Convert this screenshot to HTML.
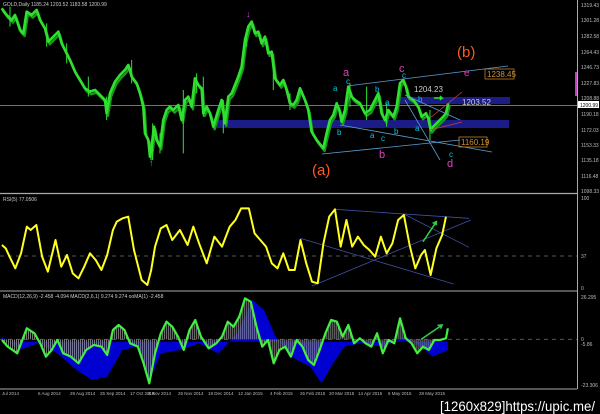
<!DOCTYPE html>
<html><head><meta charset="utf-8"><style>
html,body{margin:0;padding:0;background:#000;width:600px;height:414px;overflow:hidden}
svg{display:block}
text{font-family:"Liberation Sans",sans-serif}
</style></head><body>
<svg width="600" height="414" viewBox="0 0 600 414">
<defs>
<pattern id="hs" width="2" height="4" patternUnits="userSpaceOnUse" patternTransform="scale(2.61,3)"><rect width="1" height="4" fill="#8a8a8a"/></pattern>
</defs>
<rect width="600" height="414" fill="#000"/>
<rect x="217" y="120" width="292" height="8" fill="#1c1c88"/>
<rect x="397" y="97" width="113" height="7" fill="#1c1c88"/>
<line x1="0" y1="105.5" x2="577" y2="105.5" stroke="#9a9a9a" stroke-width="0.8"/>
<g transform="scale(0.3333)">
<polyline fill="none" stroke="#1a9a1a" stroke-width="7" stroke-linejoin="round" transform="translate(4,8)" points="5,25 20,45 35,60 45,45 60,90 70,100 80,35 95,45 110,30 120,60 135,85 145,125 160,110 175,95 185,130 195,150 210,180 225,215 240,240 255,265 270,275 285,270 300,285 315,300 320,340 330,280 345,245 360,225 375,210 385,195 395,230 410,250 420,280 430,320 435,400 445,420 450,470 455,440 462,380 470,420 480,440 490,360 500,330 510,320 520,330 535,315 545,360 555,300 565,290 575,320 585,235 595,255 605,265 610,340 620,320 630,340 640,380 655,330 665,300 675,370 685,290 695,280 705,255 715,230 725,200 735,120 745,80 755,65 765,100 775,95 785,130 795,110 805,160 815,155 825,235 840,255 850,240 860,270 870,310 880,315 890,300 900,265 915,300 925,330 935,395 950,420 970,445 980,400 990,360 1000,345 1010,310 1018,330 1025,365 1035,330 1045,260 1055,290 1065,300 1080,310 1095,340 1110,330 1125,300 1135,280 1145,340 1155,360 1165,330 1180,350 1190,320 1200,250 1210,240 1218,260 1225,290 1240,300 1255,320 1265,350 1278,340 1285,355 1292,390 1300,380 1310,370 1320,360 1330,350 1338,340 1345,310"/>
<polyline fill="none" stroke="#30e030" stroke-width="8" stroke-linejoin="round" points="5,25 20,45 35,60 45,45 60,90 70,100 80,35 95,45 110,30 120,60 135,85 145,125 160,110 175,95 185,130 195,150 210,180 225,215 240,240 255,265 270,275 285,270 300,285 315,300 320,340 330,280 345,245 360,225 375,210 385,195 395,230 410,250 420,280 430,320 435,400 445,420 450,470 455,440 462,380 470,420 480,440 490,360 500,330 510,320 520,330 535,315 545,360 555,300 565,290 575,320 585,235 595,255 605,265 610,340 620,320 630,340 640,380 655,330 665,300 675,370 685,290 695,280 705,255 715,230 725,200 735,120 745,80 755,65 765,100 775,95 785,130 795,110 805,160 815,155 825,235 840,255 850,240 860,270 870,310 880,315 890,300 900,265 915,300 925,330 935,395 950,420 970,445 980,400 990,360 1000,345 1010,310 1018,330 1025,365 1035,330 1045,260 1055,290 1065,300 1080,310 1095,340 1110,330 1125,300 1135,280 1145,340 1155,360 1165,330 1180,350 1190,320 1200,250 1210,240 1218,260 1225,290 1240,300 1255,320 1265,350 1278,340 1285,355 1292,390 1300,380 1310,370 1320,360 1330,350 1338,340 1345,310"/>
<path d="M550,270V460M320,290V360M610,230V350M670,300V400M1100,260V360M1290,330V420M458,370V480M30,20V80M140,70V140M200,130V190M265,230V290M395,180V250M480,400V460M590,220V280M740,100V140M820,200V270M870,280V330M1050,250V320M1160,310V380" stroke="#30e030" stroke-width="3"/>
</g>
<g stroke="#5aa0d8" stroke-width="0.8" fill="none">
<line x1="347" y1="86" x2="508" y2="66"/>
<line x1="322" y1="154" x2="460" y2="140"/>
<line x1="340" y1="125" x2="492" y2="152"/>
<line x1="405" y1="95" x2="460" y2="120"/>
<line x1="405" y1="100" x2="440" y2="160"/>
</g>
<g stroke="#c84040" stroke-width="0.8"><line x1="430" y1="118" x2="462" y2="92"/><line x1="430" y1="130" x2="462" y2="122"/></g>
<g font-size="8" fill="#00c8e0">
<text x="346" y="84">c</text><text x="333" y="91">a</text>
<text x="375" y="92">b</text><text x="385" y="105">a</text>
<text x="337" y="135">b</text><text x="370" y="138">a</text>
<text x="381" y="141">c</text><text x="394" y="134">b</text>
<text x="402" y="78">c</text><text x="418" y="102">b</text>
<text x="415" y="131">a</text><text x="449" y="157">c</text>
</g>
<text x="343" y="76" font-size="11" fill="#e040c0">a</text>
<text x="399" y="72" font-size="11" fill="#e040c0">c</text>
<text x="379" y="158" font-size="11" fill="#e040c0">b</text>
<text x="447" y="167" font-size="11" fill="#e040c0">d</text>
<text x="464" y="76" font-size="10" fill="#e040c0">e</text>
<text x="312" y="175" font-size="15" fill="#ff5a20">(a)</text>
<text x="457" y="57" font-size="15" fill="#ff5a20">(b)</text>
<text x="414" y="92" font-size="8" fill="#ccc">1204.23</text>
<text x="462" y="105" font-size="8" fill="#ccc">1203.52</text>
<rect x="485" y="69" width="29" height="10" fill="none" stroke="#c08020" stroke-width="0.8"/>
<text x="487" y="77" font-size="8" fill="#d09030">1238.45</text>
<rect x="459" y="137" width="28" height="10" fill="none" stroke="#c08020" stroke-width="0.8"/>
<text x="461" y="145" font-size="8" fill="#d09030">1160.19</text>
<path d="M434,98h8l-2,-2M442,98l-2,2" stroke="#30e030" stroke-width="1.5" fill="none"/>
<text x="149" y="166" font-size="9" fill="#30a0e0">↑</text>
<text x="246" y="17" font-size="9" fill="#e040e0">↓</text>
<text x="3" y="6" font-size="5" fill="#ccc">GOLD,Daily  1185.24 1203.52 1183.58 1200.99</text>
<line x1="0" y1="193.5" x2="577" y2="193.5" stroke="#aaa" stroke-width="1.2"/>
<line x1="0" y1="291" x2="577" y2="291" stroke="#aaa" stroke-width="1"/>
<line x1="0" y1="389" x2="577" y2="389" stroke="#aaa" stroke-width="1"/>
<line x1="577.5" y1="0" x2="577.5" y2="389" stroke="#aaa" stroke-width="1"/>
<rect x="575" y="72" width="2" height="24" fill="#c040c0"/>
<g font-size="5" fill="#bbb">
<text x="581" y="7">1319.43</text><text x="581" y="22">1301.28</text><text x="581" y="38">1282.58</text>
<text x="581" y="54">1264.43</text><text x="581" y="69">1246.73</text><text x="581" y="85">1227.83</text>
<text x="581" y="100">1208.88</text><text x="581" y="116">1190.18</text><text x="581" y="132">1172.03</text>
<text x="581" y="147">1153.33</text><text x="581" y="162">1135.18</text><text x="581" y="178">1116.48</text>
<text x="581" y="193">1098.33</text><text x="581" y="200">100</text><text x="581" y="258">37</text>
<text x="581" y="290">0</text><text x="581" y="299">26.295</text><text x="581" y="341">0</text>
<text x="581" y="346">-5.86</text><text x="581" y="387">-23.306</text>
</g>
<rect x="578" y="101" width="21" height="7" fill="#fff"/><text x="580" y="107" font-size="5" fill="#000">1200.99</text>
<g transform="translate(0,190) scale(0.3828,0.3333)">
<line x1="0" y1="198" x2="1507" y2="198" stroke="#555" stroke-dasharray="4,4" vector-effect="non-scaling-stroke"/>
<line x1="0" y1="448" x2="1507" y2="448" stroke="#555" stroke-dasharray="4,4" vector-effect="non-scaling-stroke"/>
<g stroke="#4050a0" fill="none" stroke-width="0.8">
<line x1="875" y1="58" x2="1225" y2="85" vector-effect="non-scaling-stroke"/>
<line x1="785" y1="145" x2="1185" y2="282" vector-effect="non-scaling-stroke"/>
<line x1="815" y1="288" x2="1230" y2="90" vector-effect="non-scaling-stroke"/>
<line x1="1055" y1="72" x2="1225" y2="172" vector-effect="non-scaling-stroke"/>
</g>
<polyline fill="none" stroke="#ffff20" stroke-width="2" vector-effect="non-scaling-stroke" stroke-linejoin="round" points="5,165 15,175 25,200 40,235 55,190 70,110 80,120 95,105 110,200 125,245 145,150 160,230 175,195 190,250 205,265 220,230 235,190 250,210 265,240 280,195 295,120 305,95 320,85 335,80 350,180 370,270 385,285 395,240 405,170 420,115 435,105 450,150 470,120 490,165 505,110 520,160 540,220 560,140 580,170 600,110 615,90 630,55 650,55 665,130 680,150 695,170 710,220 725,235 740,190 755,240 770,240 785,150 800,220 815,275 830,280 845,160 860,80 875,58 890,170 905,90 920,170 935,140 950,165 965,180 980,200 995,140 1010,190 1025,160 1040,90 1055,75 1070,165 1085,235 1100,195 1110,180 1125,255 1140,175 1155,135 1165,80"/>
<path d="M1105,155L1140,95M1130,100l10,-5l-1,11" stroke="#30d050" stroke-width="1.5" fill="none" vector-effect="non-scaling-stroke"/>
<polygon fill="#0000d0" points="5,455 5,440 50,480 100,460 150,490 200,540 240,570 280,560 320,480 360,470 390,575 420,490 470,480 520,460 570,490 620,430 660,330 690,360 720,440 760,500 810,530 840,580 870,520 900,470 940,460 1000,470 1060,440 1100,470 1130,500 1170,480 1170,465 1170,455"/>
<polygon fill="url(#hs)" opacity="0.9" points="5,450 20,470 45,490 70,415 90,430 105,460 120,500 135,480 150,450 165,490 185,500 205,520 225,480 245,465 265,470 280,495 295,420 310,405 325,420 340,460 360,470 375,520 390,580 405,490 420,430 435,395 450,410 465,440 480,480 495,420 510,390 525,440 545,475 565,460 580,440 595,395 610,410 625,380 640,325 655,335 670,410 685,470 700,450 715,520 730,480 745,470 760,500 775,450 790,470 805,510 820,525 835,480 850,430 865,390 880,395 895,440 910,405 925,460 940,445 955,460 970,470 985,430 1000,490 1015,450 1030,460 1045,385 1060,445 1075,460 1090,490 1105,470 1120,480 1135,450 1150,450 1165,445 1170,448 5,448"/>
<polyline fill="none" stroke="#40f040" stroke-width="2.2" vector-effect="non-scaling-stroke" stroke-linejoin="round" points="5,450 20,470 45,490 70,415 90,430 105,460 120,500 135,480 150,450 165,490 185,500 205,520 225,480 245,465 265,470 280,495 295,420 310,405 325,420 340,460 360,470 375,520 390,580 405,490 420,430 435,395 450,410 465,440 480,480 495,420 510,390 525,440 545,475 565,460 580,440 595,395 610,410 625,380 640,325 655,335 670,410 685,470 700,450 715,520 730,480 745,470 760,500 775,450 790,470 805,510 820,525 835,480 850,430 865,390 880,395 895,440 910,405 925,460 940,445 955,460 970,470 985,430 1000,490 1015,450 1030,460 1045,385 1060,445 1075,460 1090,490 1105,470 1120,480 1135,450 1150,450 1165,445 1170,415"/>
<path d="M1100,448L1155,405M1143,406l12,-1l-4,11" stroke="#30d050" stroke-width="1.5" fill="none" vector-effect="non-scaling-stroke"/>
</g>
<text x="3" y="201" font-size="5" fill="#ccc">RSI(5) 77.0506</text>
<text x="3" y="298" font-size="5" fill="#ccc">MACD(12,26,9) -2.458 -4.094  MACD(2,6,1) 9.274 9.274  ooMA(1) -2.458</text>
<g font-size="4.5" fill="#bbb">
<text x="2" y="395">Jul 2014</text><text x="38" y="395">6 Aug 2014</text><text x="70" y="395">29 Aug 2014</text>
<text x="100" y="395">25 Sep 2014</text><text x="130" y="395">17 Oct 2014</text><text x="148" y="395">4 Nov 2014</text>
<text x="178" y="395">26 Nov 2014</text><text x="208" y="395">18 Dec 2014</text><text x="238" y="395">12 Jan 2015</text>
<text x="270" y="395">4 Feb 2015</text><text x="300" y="395">26 Feb 2015</text><text x="329" y="395">20 Mar 2015</text>
<text x="358" y="395">14 Apr 2015</text><text x="388" y="395">6 May 2015</text><text x="419" y="395">28 May 2015</text>
</g>
<text x="440" y="411" font-size="14" fill="#fff" font-family="Liberation Mono, monospace" textLength="155" lengthAdjust="spacingAndGlyphs">[1260x829]https://upic.me/</text>
</svg>
</body></html>
